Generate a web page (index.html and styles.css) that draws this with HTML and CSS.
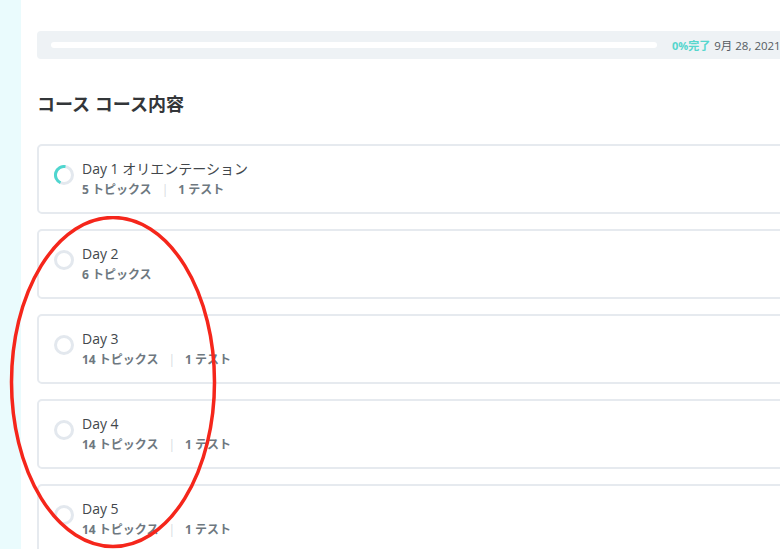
FILE: index.html
```html
<!DOCTYPE html>
<html lang="ja">
<head>
<meta charset="utf-8">
<title>コース内容</title>
<link rel="stylesheet" href="styles.css">
</head>
<body>
<div class="page">
  <aside class="side"></aside>
  <main class="main">
    <div class="progress">
      <div class="track"></div>
      <span class="pct">0%完了</span>
      <span class="date">9月 28, 2021</span>
    </div>
    <h2 class="heading">コース コース内容</h2>
    <ul class="lessons">
      <li class="card">
        <svg class="status" viewBox="0 0 20 20" width="20" height="20">
          <circle cx="10" cy="10" r="8.5" fill="none" stroke="#e3e8ee" stroke-width="3"/>
          <path d="M11.5 1.63 A8.5 8.5 0 0 0 6.5 17.75" fill="none" stroke="#4fd6cf" stroke-width="3"/>
        </svg>
        <div class="info">
          <div class="title">Day 1 オリエンテーション</div>
          <div class="meta"><span>5 トピックス</span><span class="sep">|</span><span>1 テスト</span></div>
        </div>
      </li>
      <li class="card">
        <svg class="status" viewBox="0 0 20 20" width="20" height="20"><circle cx="10" cy="10" r="8.5" fill="none" stroke="#e3e8ee" stroke-width="3"/></svg>
        <div class="info">
          <div class="title">Day 2</div>
          <div class="meta"><span>6 トピックス</span></div>
        </div>
      </li>
      <li class="card">
        <svg class="status" viewBox="0 0 20 20" width="20" height="20"><circle cx="10" cy="10" r="8.5" fill="none" stroke="#e3e8ee" stroke-width="3"/></svg>
        <div class="info">
          <div class="title">Day 3</div>
          <div class="meta"><span>14 トピックス</span><span class="sep">|</span><span>1 テスト</span></div>
        </div>
      </li>
      <li class="card">
        <svg class="status" viewBox="0 0 20 20" width="20" height="20"><circle cx="10" cy="10" r="8.5" fill="none" stroke="#e3e8ee" stroke-width="3"/></svg>
        <div class="info">
          <div class="title">Day 4</div>
          <div class="meta"><span>14 トピックス</span><span class="sep">|</span><span>1 テスト</span></div>
        </div>
      </li>
      <li class="card">
        <svg class="status" viewBox="0 0 20 20" width="20" height="20"><circle cx="10" cy="10" r="8.5" fill="none" stroke="#e3e8ee" stroke-width="3"/></svg>
        <div class="info">
          <div class="title">Day 5</div>
          <div class="meta"><span>14 トピックス</span><span class="sep">|</span><span>1 テスト</span></div>
        </div>
      </li>
    </ul>
  </main>
  <svg class="annotation" viewBox="0 0 210 340" width="210" height="340">
    <ellipse cx="105" cy="166" rx="101.5" ry="164.5" fill="none" stroke="#f5261b" stroke-width="3.5"/>
  </svg>
</div>
</body>
</html>
```

FILE: styles.css
```css
html, body {
  margin: 0;
  padding: 0;
  background: #ffffff;
  overflow: hidden;
}

body {
  font-family: "Open Sans", "Noto Sans CJK JP", sans-serif;
  color: #3a3f44;
}

.page {
  position: relative;
  display: flex;
  width: 780px;
  height: 549px;
  overflow: hidden;
}

.side {
  flex: 0 0 21px;
  background: #eafbfd;
}

.main {
  flex: 0 0 auto;
  width: 800px;
  padding: 31px 0 0 16px;
}

.progress {
  display: flex;
  align-items: center;
  height: 28px;
  padding-left: 14px;
  background: #eef2f5;
  border-radius: 4px;
  white-space: nowrap;
}

.track {
  flex: 0 0 606px;
  height: 6px;
  background: #ffffff;
  border-radius: 3px;
}

.pct {
  margin-left: 15px;
  font-size: 11px;
  font-weight: 700;
  color: #55d6cd;
}

.date {
  margin-left: 4px;
  font-size: 11.5px;
  color: #555b61;
}

.heading {
  margin: 33px 0 0;
  font-size: 18px;
  font-weight: 700;
  line-height: 24px;
  color: #333639;
}

.lessons {
  list-style: none;
  margin: 28px 0 0;
  padding: 0;
  display: flex;
  flex-direction: column;
  gap: 15px;
}

.card {
  box-sizing: border-box;
  height: 70px;
  display: flex;
  align-items: center;
  gap: 8px;
  padding: 0 15px;
  border: 2px solid #e6eaef;
  border-radius: 5px;
  background: #fff;
}

.status {
  flex: 0 0 20px;
  margin-top: -9px;
}

.info {
  display: flex;
  flex-direction: column;
  gap: 2px;
}

.title {
  font-size: 14px;
  line-height: 20px;
  color: #42474c;
}

.meta {
  display: flex;
  gap: 10px;
  font-size: 12px;
  font-weight: 700;
  line-height: 18px;
  color: #6e7880;
}

.sep {
  font-weight: 400;
  color: #d6dbe0;
}

.annotation {
  position: absolute;
  left: 8px;
  top: 216px;
}
```
